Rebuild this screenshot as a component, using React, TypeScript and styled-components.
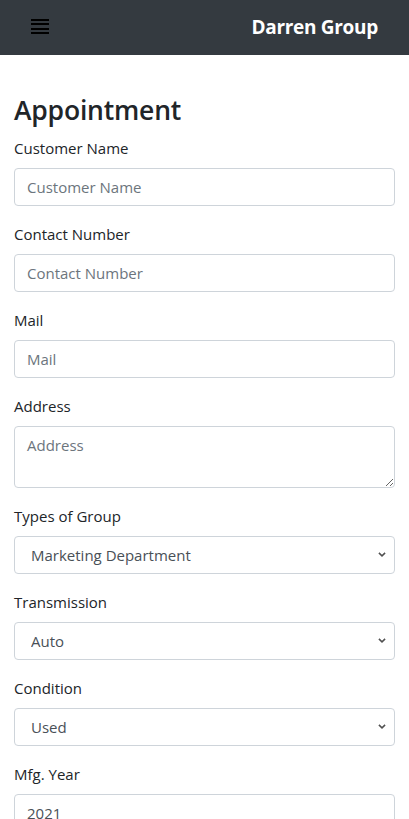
import React from 'react';
import styled, { createGlobalStyle } from 'styled-components';

const GlobalStyle = createGlobalStyle`
  * { box-sizing: border-box; }
  body {
    margin: 0;
    background: #fff;
    color: #212529;
    font-family: 'Open Sans', 'Noto Sans', sans-serif;
    font-size: 16px;
    line-height: 1.5;
  }
  ::placeholder { color: #6c757d; opacity: 1; }
`;

type Field =
  | { kind: 'input'; label: string; placeholder?: string; value?: string }
  | { kind: 'textarea'; label: string; placeholder: string }
  | { kind: 'select'; label: string; options: string[] };

const fields: Field[] = [
  { kind: 'input', label: 'Customer Name', placeholder: 'Customer Name' },
  { kind: 'input', label: 'Contact Number', placeholder: 'Contact Number' },
  { kind: 'input', label: 'Mail', placeholder: 'Mail' },
  { kind: 'textarea', label: 'Address', placeholder: 'Address' },
  { kind: 'select', label: 'Types of Group', options: ['Marketing Department', 'Sales Department'] },
  { kind: 'select', label: 'Transmission', options: ['Auto', 'Manual'] },
  { kind: 'select', label: 'Condition', options: ['Used', 'New'] },
  { kind: 'input', label: 'Mfg. Year', value: '2021' },
];

// small grey chevron like the native one in the screenshot
const chevron =
  "url(\"data:image/svg+xml;utf8,<svg xmlns='http://www.w3.org/2000/svg' width='8' height='5' viewBox='0 0 8 5'><path d='M0.9 0.9 L4 3.9 L7.1 0.9' fill='none' stroke='%23505050' stroke-width='1.5'/></svg>\")";

export default function App() {
  return (
    <>
      <GlobalStyle />
      <Navbar>
        <Toggler aria-label='menu'>
          <Bar />
          <Bar />
          <Bar />
          <Bar />
        </Toggler>
        <Brand>Darren Group</Brand>
      </Navbar>
      <Container>
        <Title>Appointment</Title>
        {fields.map((f) => (
          <Group key={f.label}>
            <Label>{f.label}</Label>
            {f.kind === 'input' && (
              <Input placeholder={f.placeholder} defaultValue={f.value} />
            )}
            {f.kind === 'textarea' && <TextArea rows={2} placeholder={f.placeholder} />}
            {f.kind === 'select' && (
              <Select defaultValue={f.options[0]}>
                {f.options.map((o) => (
                  <option key={o}>{o}</option>
                ))}
              </Select>
            )}
          </Group>
        ))}
      </Container>
    </>
  );
}

const Navbar = styled.nav`
  display: flex;
  align-items: center;
  justify-content: space-between;
  height: 55px;
  padding: 0 31px;
  background-color: #343a40;
`;

const Toggler = styled.div`
  display: flex;
  flex-direction: column;
  gap: 2.2px;
  width: 18px;
  margin-top: -2px;
`;

const Bar = styled.span`
  display: block;
  height: 2px;
  background: #000;
`;

const Brand = styled.div`
  color: #fff;
  font-size: 19px;
  font-weight: 700;
  letter-spacing: -0.3px;
`;

const Container = styled.main`
  padding: 39px 14px 0;
`;

const Title = styled.h2`
  margin: 0 0 8px;
  font-size: 26.5px;
  font-weight: 600;
  line-height: 33.6px;
  letter-spacing: -0.2px;
`;

const Group = styled.div`
  margin-bottom: 16px;
`;

const Label = styled.label`
  display: block;
  margin-bottom: 8px;
  font-size: 15px;
  line-height: 24px;
`;

const controlCss = `
  display: block;
  width: 100%;
  padding: 6px 12px;
  font-family: inherit;
  font-size: 15px;
  line-height: 24px;
  color: #495057;
  background-color: #fff;
  border: 1px solid #ced4da;
  border-radius: 4px;
  outline: none;
`;

const Input = styled.input`
  ${controlCss}
  height: 38px;
`;

const TextArea = styled.textarea`
  ${controlCss}
  height: 62px;
`;

const Select = styled.select`
  ${controlCss}
  height: 38px;
  padding-left: 16px;
  appearance: none;
  background-image: ${chevron};
  background-repeat: no-repeat;
  background-position: right 8px center;
  background-size: 8px 5px;
`;
